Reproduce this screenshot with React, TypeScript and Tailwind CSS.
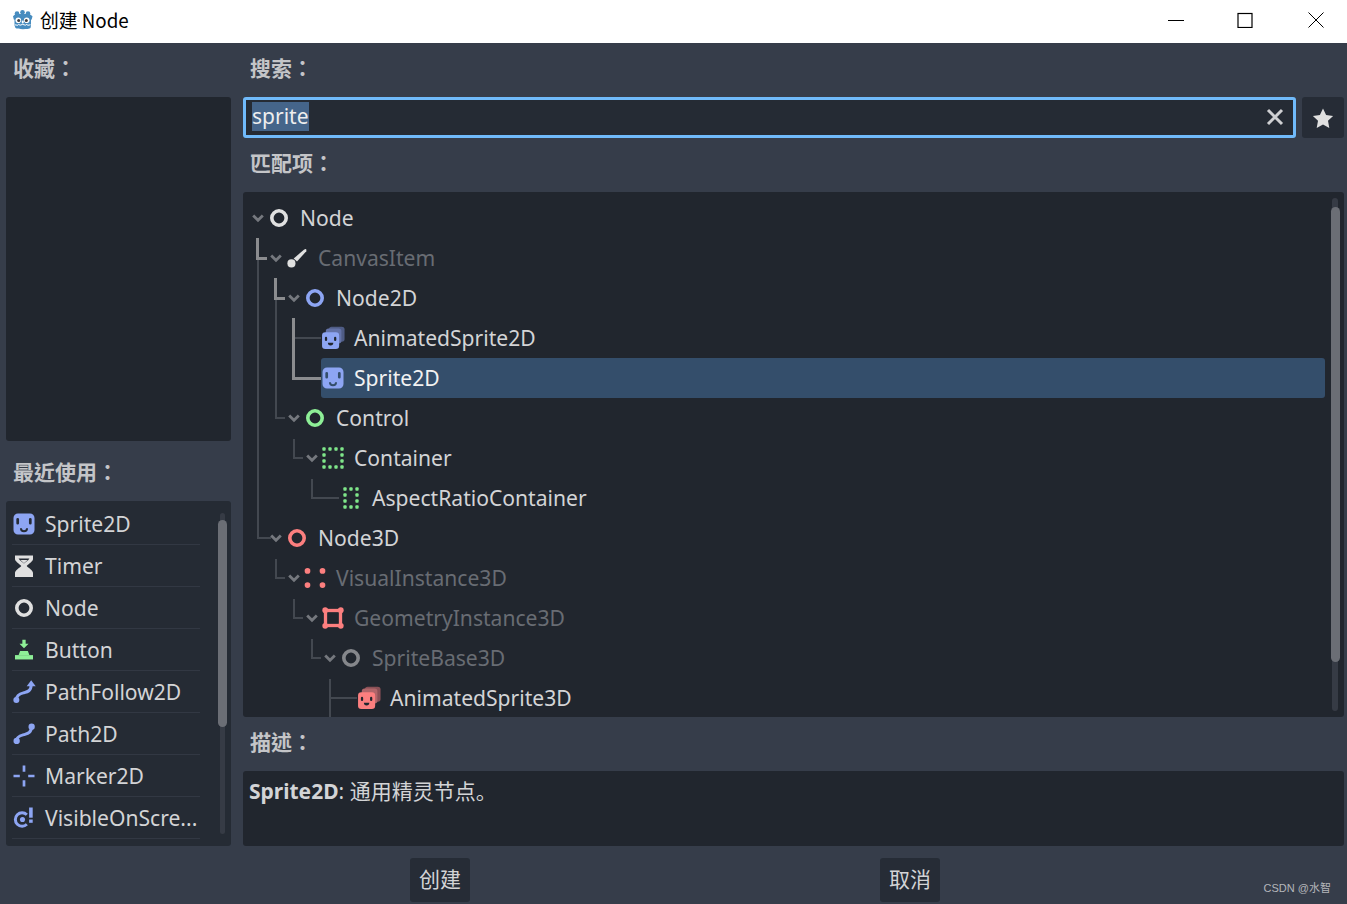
import React from "react";

const SPRITE =
  "M4 1a3 3 0 0 0-3 3v8a3 3 0 0 0 3 3h8a3 3 0 0 0 3-3V4a3 3 0 0 0-3-3zM3.800 4a.9.9 0 0 1 .9.9v2.600a.9.9 0 0 1-1.800 0V4.900a.9.9 0 0 1 .9-.9zm8.400 0a.9.9 0 0 1 .9.9v2.600a.9.9 0 0 1-1.800 0V4.900a.9.9 0 0 1 .9-.9zM5.300 10.800h1.300a1.400 1.400 0 0 0 2.800 0h1.300a2.700 2.700 0 0 1-5.400 0z";

const Box = ({ children }: { children: React.ReactNode }) => (
  <svg width="24" height="24" viewBox="0 0 16 16" className="shrink-0">
    {children}
  </svg>
);

const Ring = ({ color }: { color: string }) => (
  <Box>
    <circle cx="8" cy="8" r="4.800" fill="none" stroke={color} strokeWidth="2.400" />
  </Box>
);

const Sprite = () => (
  <Box>
    <path fillRule="evenodd" fill="#8da5f3" d={SPRITE} />
  </Box>
);

const Animated = ({ color, back, mid }: { color: string; back: string; mid: string }) => (
  <Box>
    <rect x="5.300" y="0.500" width="10.400" height="10" rx="1.800" fill={back} />
    <rect x="3.200" y="1.600" width="10.400" height="10" rx="1.800" fill={mid} />
    <rect x="0.700" y="4.200" width="11.400" height="11.200" rx="2.200" fill={color} />
    <rect x="2.600" y="7.200" width="1.500" height="2.800" rx="0.750" fill="#21262e" />
    <rect x="8.700" y="7.200" width="1.500" height="2.800" rx="0.750" fill="#21262e" />
    <path d="M4.600 11.200h3.600a1.800 1.800 0 0 1-3.600 0z" fill="#21262e" />
  </Box>
);

const Brush = () => (
  <Box>
    <path d="M5.800 8.300 12.600 2.500Q14.600 1.300 14.200 3.500L8 10.300z" fill="#e0e0e0" />
    <circle cx="4.300" cy="11.600" r="2.700" fill="#e0e0e0" />
  </Box>
);

// Dotted frame used by the container classes
const Dotted = ({ narrow }: { narrow?: boolean }) => {
  const across = narrow ? [4, 8, 12] : [2, 6, 10, 14];
  const down = [2, 6, 10, 14];
  const dots: [number, number][] = [];
  across.forEach((x) => down.forEach((y) => {
    const onEdge = x === across[0] || x === across[across.length - 1] || y === 2 || y === 14;
    if (onEdge) dots.push([x, y]);
  }));
  return (
    <Box>
      {dots.map(([x, y]) => (
        <rect key={`${x}-${y}`} x={x - 1.100} y={y - 1.100} width="2.200" height="2.200" rx="0.600" fill="#7fe68a" />
      ))}
    </Box>
  );
};

const Dots = () => (
  <Box>
    {[3, 13].flatMap((x) =>
      [3.300, 12.700].map((y) => <circle key={`${x}${y}`} cx={x} cy={y} r="1.900" fill="#fc7f7f" />)
    )}
  </Box>
);

const Geometry = () => (
  <Box>
    <rect x="3" y="3" width="10" height="10" fill="none" stroke="#fc7f7f" strokeWidth="2.200" />
    {[2.800, 13.200].flatMap((x) =>
      [2.800, 13.200].map((y) => <circle key={`${x}${y}`} cx={x} cy={y} r="1.900" fill="#fc7f7f" />)
    )}
  </Box>
);

const Hourglass = () => (
  <Box>
    <path
      d="M2 1h12v2.400c0 1.600-2.600 3-4.200 4.600 1.600 1.600 4.200 3 4.200 4.600v2.800H2v-2.800c0-1.600 2.600-3 4.200-4.600C4.600 6.400 2 5 2 3.400zM4.400 3c.4 1 2.400 2.200 3.600 3.400C9.200 5.200 11.200 4 11.600 3z"
      fillRule="evenodd"
      fill="#e0e0e0"
    />
    <path d="M5.600 4h4.800L8 6.200z" fill="#e0e0e0" />
  </Box>
);

const ButtonIcon = () => (
  <Box>
    <path d="M6.900 1.200h2.200v2.600H11L8 6.900 5 3.800h1.900z" fill="#8eef97" />
    <path d="M5.400 8.600h5.200l1 2.800H4.400z" fill="#8eef97" />
    <rect x="2" y="11.400" width="12" height="2.900" fill="#8eef97" />
  </Box>
);

const PathFollow = () => (
  <Box>
    <path d="M3 13C3 9.500 6 9 8 8.500 10 8 12.800 7.500 12.800 3" fill="none" stroke="#8da5f3" strokeWidth="2" />
    <circle cx="2.900" cy="13.400" r="2" fill="#8da5f3" />
    <path d="M12.800.2l3 3.900H9.800z" fill="#8da5f3" />
  </Box>
);

const PathIcon = () => (
  <Box>
    <path d="M3 12.500C3 9.500 6 9 8 8.400 10 7.800 13 7.500 13 3" fill="none" stroke="#8da5f3" strokeWidth="2" />
    <circle cx="3.100" cy="12.600" r="2.100" fill="#8da5f3" />
    <circle cx="13.100" cy="3.100" r="2.100" fill="#8da5f3" />
  </Box>
);

const Marker = () => (
  <Box>
    <path d="M7.100 1h1.800v4.200H7.100zM7.100 10.800h1.800V15H7.100zM1 7.100h4.200v1.800H1zM10.800 7.100H15v1.800h-4.200z" fill="#8da5f3" />
  </Box>
);

const VisibleIcon = () => (
  <Box>
    <path d="M9.900 5.800A4.500 4.500 0 1 0 9.900 12.200" fill="none" stroke="#8da5f3" strokeWidth="2" />
    <circle cx="7" cy="9" r="1.700" fill="#8da5f3" />
    <path d="M11.400 1h2.400v6.800h-2.400z" fill="#8da5f3" />
    <rect x="11.400" y="9" width="2.400" height="2.200" fill="#8da5f3" />
  </Box>
);

type Row = { depth: number; label: string; icon: React.ReactNode; arrow?: boolean; dim?: boolean; selected?: boolean };

const ROWS: Row[] = [
  { depth: 0, label: "Node", icon: <Ring color="#e0e0e0" />, arrow: true },
  { depth: 1, label: "CanvasItem", icon: <Brush />, arrow: true, dim: true },
  { depth: 2, label: "Node2D", icon: <Ring color="#8da5f3" />, arrow: true },
  { depth: 3, label: "AnimatedSprite2D", icon: <Animated color="#8da5f3" back="#4f5c85" mid="#6473a8" /> },
  { depth: 3, label: "Sprite2D", icon: <Sprite />, selected: true },
  { depth: 2, label: "Control", icon: <Ring color="#8eef97" />, arrow: true },
  { depth: 3, label: "Container", icon: <Dotted />, arrow: true },
  { depth: 4, label: "AspectRatioContainer", icon: <Dotted narrow /> },
  { depth: 1, label: "Node3D", icon: <Ring color="#fc7f7f" />, arrow: true },
  { depth: 2, label: "VisualInstance3D", icon: <Dots />, arrow: true, dim: true },
  { depth: 3, label: "GeometryInstance3D", icon: <Geometry />, arrow: true, dim: true },
  { depth: 4, label: "SpriteBase3D", icon: <Ring color="#85878b" />, arrow: true, dim: true },
  { depth: 5, label: "AnimatedSprite3D", icon: <Animated color="#fc7f7f" back="#8a5056" mid="#b0666a" /> },
];

const RECENT: { label: string; icon: React.ReactNode }[] = [
  { label: "Sprite2D", icon: <Sprite /> },
  { label: "Timer", icon: <Hourglass /> },
  { label: "Node", icon: <Ring color="#e0e0e0" /> },
  { label: "Button", icon: <ButtonIcon /> },
  { label: "PathFollow2D", icon: <PathFollow /> },
  { label: "Path2D", icon: <PathIcon /> },
  { label: "Marker2D", icon: <Marker /> },
  { label: "VisibleOnScre...", icon: <VisibleIcon /> },
];

const FONT = "[font-family:'Noto_Sans','Noto_Sans_CJK_SC',sans-serif]";

const Heading = ({ text, h }: { text: string; h: string }) => (
  <div className={`${h} flex items-center pl-[7px] text-[21px] font-bold text-[#c4c5c8] [font-family:'Noto_Sans_CJK_TC',sans-serif]`}>
    {text}
  </div>
);

const Chevron = () => (
  <svg width="16" height="12" viewBox="0 0 16 12" className="shrink-0">
    <path d="M3.200 3.400 8 8.200l4.800-4.800" fill="none" stroke="#75787e" strokeWidth="2.800" />
  </svg>
);

// Hierarchy connector lines, in the coordinates of the tree panel
const Guides = () => {
  const bright = "#8b8c8f";
  const faint = "#434850";
  return (
    <svg className="pointer-events-none absolute left-0 top-0" width="1101" height="525">
      <g fill="none" stroke={faint} strokeWidth="2">
        <path d="M15 67V346H28" />
        <path d="M33 107V226H42" />
        <path d="M51 247V266H60" />
        <path d="M69 287V306H96" />
        <path d="M33 367V386H42" />
        <path d="M51 407V426H60" />
        <path d="M69 447V466H78" />
        <path d="M87 487V525M87 506H114" />
        <path d="M52 146H78" />
      </g>
      <g fill="none" stroke={bright} strokeWidth="3">
        <path d="M14.500 46V66.500H24" />
        <path d="M32.500 86V106.500H42" />
        <path d="M50.500 126V186.500H78" />
      </g>
    </svg>
  );
};

export default function App() {
  return (
    <div className={`flex h-[904px] w-[1347px] flex-col overflow-hidden bg-[#363d4a] ${FONT}`}>
      <header className="flex h-[43px] shrink-0 items-center bg-white pb-[3px] pl-[11px] text-black">
        <svg width="24" height="24" viewBox="0 0 24 24" className="shrink-0">
          <g fill="#478cbf">
            <circle cx="6" cy="5.600" r="2.300" />
            <circle cx="11.500" cy="4.200" r="2.300" />
            <circle cx="17" cy="5.600" r="2.300" />
            <path d="M4.500 6h14l3 2.200-.8 3.300-.7.200v5.800l-.5 2.500c-2 1.600-13 1.600-15 0L3.500 17.500v-5.800l-.7-.2L2 8.200z" />
          </g>
          <circle cx="7.300" cy="12.300" r="2.800" fill="#fff" />
          <circle cx="15.700" cy="12.300" r="2.800" fill="#fff" />
          <circle cx="7.700" cy="12.500" r="1.500" fill="#414042" />
          <circle cx="15.300" cy="12.500" r="1.500" fill="#414042" />
          <rect x="10.800" y="12.600" width="1.900" height="2.800" rx="0.900" fill="#fff" />
          <path d="M3.800 16.800l3 .5.700-1.100 1.500 1 2.700-.8 2.700.8 1.500-1 .7 1.100 3-.5" fill="none" stroke="#fff" strokeWidth="1" />
        </svg>
        <span className="ml-[5px] text-[18.800px] [font-family:'Noto_Sans_CJK_SC','Noto_Sans',sans-serif]">创建 Node</span>
        <div className="ml-auto flex items-center">
          <svg width="16" height="16" viewBox="0 0 16 16" className="mr-[53px]">
            <path d="M0 8.500h16" stroke="#000" strokeWidth="1" />
          </svg>
          <svg width="16" height="16" viewBox="0 0 16 16" className="mr-[55px]">
            <rect x="1" y="1.500" width="14" height="14" fill="none" stroke="#000" strokeWidth="1.200" />
          </svg>
          <svg width="16" height="16" viewBox="0 0 16 16" className="mr-[23px]">
            <path d="M.5.500l15 15M15.500.500l-15 15" stroke="#000" strokeWidth="1" />
          </svg>
        </div>
      </header>

      <main className="flex h-[803px] shrink-0 pl-[6px] pr-[3px]">
        <aside className="flex w-[225px] shrink-0 flex-col">
          <Heading text="收藏：" h="h-[54px] pb-[5px]" />
          <div className="h-[344px] rounded-[3px] bg-[#21262e]" />
          <Heading text="最近使用：" h="h-[60px] pt-[2px]" />
          <div className="relative flex h-[345px] rounded-[3px] bg-[#252b34] pt-[2px]">
            <ul className="w-[194px] pl-[6px]">
              {RECENT.map((r) => (
                <li key={r.label} className="flex h-[42px] items-center gap-[9px] border-b border-[#323843] text-[21.100px] text-[#d3d4d6]">
                  <span className="shrink-0">{r.icon}</span>
                  <span className="whitespace-nowrap pt-[1px]">{r.label}</span>
                </li>
              ))}
            </ul>
            <div className="absolute left-[214px] top-[12px] h-[321px] w-[5px] rounded-full bg-[#363b45]" />
            <div className="absolute left-[212px] top-[19px] h-[207px] w-[9px] rounded-full bg-[#6b6e75]" />
          </div>
        </aside>

        <section className="ml-[12px] flex min-w-0 flex-1 flex-col">
          <Heading text="搜索：" h="h-[54px] pb-[5px]" />
          <div className="flex h-[41px] shrink-0 gap-[6px]">
            <div className="flex flex-1 items-center rounded-[3px] border-[3px] border-[#70bafa] bg-[#252b34] pb-[2px] pl-[6px] pr-[9px]">
              <span className="bg-[#45658a] text-[21px] leading-[29px] text-[#eeeeee]">sprite</span>
              <svg width="18" height="18" viewBox="0 0 18 18" className="ml-auto">
                <path d="M2 2l14 14M16 2 2 16" stroke="#cfd0d2" strokeWidth="3" />
              </svg>
            </div>
            <div className="flex w-[42px] items-center justify-center rounded-[3px] bg-[#262c36]">
              <svg width="24" height="24" viewBox="0 0 24 24">
                <path d="M12 2.500l3.100 6.500 7 .9-5.100 4.900 1.300 7.100-6.300-3.400-6.300 3.400 1.300-7.100L1.900 9.900l7-.9z" fill="#e0e0e0" />
              </svg>
            </div>
          </div>
          <Heading text="匹配项：" h="h-[54px] pb-[4px]" />
          <div className="relative flex h-[525px] shrink-0 overflow-hidden rounded-[3px] bg-[#21262e]">
            <Guides />
            <ul className="relative w-[1082px] pl-[7px] pt-[6px]">
              {ROWS.map((r) => (
                <li key={r.label} className="flex h-[40px] items-center" style={{ paddingLeft: r.depth * 18 }}>
                  <span className="mr-[1px] flex w-[16px] shrink-0 justify-center">{r.arrow && <Chevron />}</span>
                  <div className={`flex h-[40px] flex-1 items-center gap-[9px] rounded-[3px] ${r.selected ? "bg-[#344e6b]" : ""}`}>
                    {r.icon}
                    <span className={`text-[21.100px] ${r.selected ? "text-[#f2f2f2]" : r.dim ? "text-[#686c73]" : "text-[#d3d4d6]"}`}>{r.label}</span>
                  </div>
                </li>
              ))}
            </ul>
            <div className="absolute left-[1089px] top-[6px] h-[513px] w-[6px] rounded-full bg-[#363b45]" />
            <div className="absolute left-[1088px] top-[15px] h-[455px] w-[9px] rounded-full bg-[#6b6e75]" />
          </div>
          <Heading text="描述：" h="h-[54px] pb-[5px]" />
          <div className="h-[75px] rounded-[3px] bg-[#21262e] px-[6px] pt-[4px] text-[21px] leading-[32px] text-[#d3d4d6]">
            <b>Sprite2D</b>: 通用精灵节点。
          </div>
        </section>
      </main>

      <footer className="relative flex flex-1 items-start justify-center gap-[410px] pl-[3px] pt-[12px]">
        <button className="flex h-[44px] w-[60px] items-center justify-center rounded-[3px] bg-[#262c36] text-[21px] text-[#d3d4d6]">创建</button>
        <button className="flex h-[44px] w-[60px] items-center justify-center rounded-[3px] bg-[#262c36] text-[21px] text-[#d3d4d6]">取消</button>
        <span className="absolute bottom-[9px] right-[16px] text-[11px] leading-[14px] text-[#b4b6ba] [font-family:'Liberation_Sans','Noto_Sans_CJK_SC',sans-serif]">CSDN @水智</span>
      </footer>
    </div>
  );
}
